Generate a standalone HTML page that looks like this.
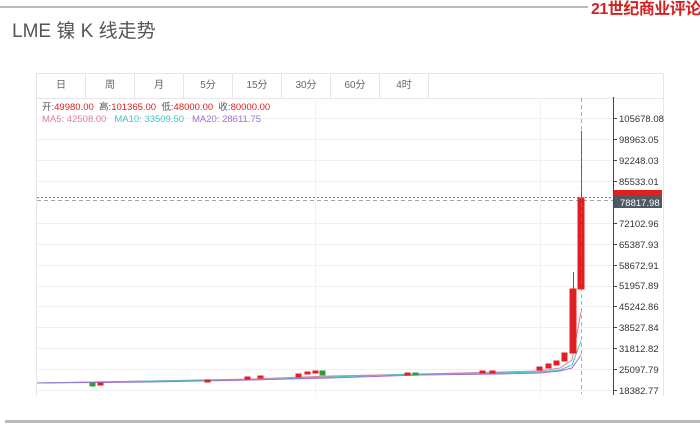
<!DOCTYPE html>
<html><head><meta charset="utf-8"><style>
body{margin:0;width:700px;height:425px;background:#fff;position:relative;overflow:hidden;font-family:"Liberation Sans","Noto Sans CJK SC",sans-serif}
.topline{position:absolute;left:0;top:6px;width:588px;height:2px;background:#bbb}
.logo{position:absolute;left:591px;top:-5px;color:#d42020;font-size:16px;font-weight:bold;letter-spacing:-0.5px;white-space:nowrap}
.title{position:absolute;left:12px;top:16px;font-size:19px;color:#555}
.box{position:absolute;left:36px;top:73px;width:626px;height:322px;border:1px solid #e6e6e6;border-bottom:none}
.tabs{position:absolute;left:0;top:0;height:24px;width:626px;border-bottom:1px solid #e6e6e6;display:flex}
.tabs div{width:48px;border-right:1px solid #e6e6e6;text-align:center;font-size:10px;line-height:24px;color:#666}
.info{position:absolute;left:42px;top:102px;font-size:9.5px;line-height:12px;white-space:nowrap;color:#555}
.r{color:#e02020}
.bottom{position:absolute;left:5px;top:420px;width:695px;height:3px;background:#bbb}
</style></head><body>
<div class="topline"></div>
<div class="logo">21世纪商业评论</div>
<div class="title">LME 镍 K 线走势</div>
<div class="box"><div class="tabs"><div>日</div><div>周</div><div>月</div><div>5分</div><div>15分</div><div>30分</div><div>60分</div><div>4时</div></div></div>
<svg width="700" height="425" style="position:absolute;left:0;top:0">
<g stroke="#f0f0f0" stroke-width="1">
<line x1="37" x2="613" y1="118.5" y2="118.5"/><line x1="37" x2="613" y1="139.5" y2="139.5"/><line x1="37" x2="613" y1="160.5" y2="160.5"/><line x1="37" x2="613" y1="181.5" y2="181.5"/><line x1="37" x2="613" y1="223.5" y2="223.5"/><line x1="37" x2="613" y1="244.5" y2="244.5"/><line x1="37" x2="613" y1="265.5" y2="265.5"/><line x1="37" x2="613" y1="286.5" y2="286.5"/><line x1="37" x2="613" y1="306.5" y2="306.5"/><line x1="37" x2="613" y1="327.5" y2="327.5"/><line x1="37" x2="613" y1="348.5" y2="348.5"/><line x1="37" x2="613" y1="369.5" y2="369.5"/><line x1="37" x2="613" y1="390.5" y2="390.5"/>
<line x1="315.5" x2="315.5" y1="98" y2="394"/><line x1="540.5" x2="540.5" y1="98" y2="394"/>
</g>
<line x1="613.5" x2="613.5" y1="97" y2="395" stroke="#444"/>
<g stroke="#444"><line x1="613" x2="617" y1="118.5" y2="118.5"/><line x1="613" x2="617" y1="139.5" y2="139.5"/><line x1="613" x2="617" y1="160.5" y2="160.5"/><line x1="613" x2="617" y1="181.5" y2="181.5"/><line x1="613" x2="617" y1="223.5" y2="223.5"/><line x1="613" x2="617" y1="244.5" y2="244.5"/><line x1="613" x2="617" y1="265.5" y2="265.5"/><line x1="613" x2="617" y1="286.5" y2="286.5"/><line x1="613" x2="617" y1="306.5" y2="306.5"/><line x1="613" x2="617" y1="327.5" y2="327.5"/><line x1="613" x2="617" y1="348.5" y2="348.5"/><line x1="613" x2="617" y1="369.5" y2="369.5"/><line x1="613" x2="617" y1="390.5" y2="390.5"/></g>
<g font-size="9.5" fill="#333" font-family="Liberation Sans,sans-serif">
<text x="619" y="122">105678.08</text><text x="619" y="143">98963.05</text><text x="619" y="164">92248.03</text><text x="619" y="185">85533.01</text><text x="619" y="227">72102.96</text><text x="619" y="248">65387.93</text><text x="619" y="269">58672.91</text><text x="619" y="289">51957.89</text><text x="619" y="310">45242.86</text><text x="619" y="331">38527.84</text><text x="619" y="352">31812.82</text><text x="619" y="373">25097.79</text><text x="619" y="394">18382.77</text>
</g>
<rect x="614" y="190" width="48" height="7" fill="#e02020"/>
<rect x="614" y="196" width="48" height="12" fill="#4f5963"/>
<text x="620" y="206" font-size="9.5" fill="#fff">78817.98</text>
<line x1="37" x2="613" y1="197.5" y2="197.5" stroke="#e05050" stroke-dasharray="2,2"/>
<line x1="37" x2="613" y1="200.5" y2="200.5" stroke="#9aa" stroke-dasharray="4,3"/>
<g fill="none" stroke-width="1">
<path d="M37 383 L150 381 L250 379 L330 376 L420 374 L500 372 L540 371 L560 368 L572 360 L581 312" stroke="#e07fa0"/>
<path d="M37 383 L150 381 L250 380 L330 377 L420 374 L500 373 L540 372 L560 370 L572 365 L581 341" stroke="#3cc8c8"/>
<path d="M37 383 L150 382 L250 380 L330 378 L420 375 L500 374 L540 373 L560 371 L572 368 L581 355" stroke="#a070d0"/>
</g>
<g fill="#e02020" stroke="#e02020">
<rect x="90" y="383" width="5" height="3" fill="#2a9d3a" stroke="#2a9d3a"/><rect x="98" y="383" width="5" height="2"/>
<rect x="205" y="380" width="5" height="2"/><rect x="245" y="377" width="5" height="2"/><rect x="258" y="376" width="5" height="2"/><rect x="296" y="374" width="5" height="3"/><rect x="305" y="372" width="5" height="2"/><rect x="313" y="371" width="5" height="2"/><rect x="320" y="371" width="5" height="4" fill="#2a9d3a" stroke="#2a9d3a"/>
<rect x="405" y="373" width="5" height="2"/><rect x="413" y="373" width="5" height="2" fill="#2a9d3a" stroke="#2a9d3a"/><rect x="480" y="371" width="5" height="2"/><rect x="490" y="371" width="5" height="2"/>
<rect x="537" y="367" width="5" height="3"/><rect x="546" y="364" width="5" height="4"/><rect x="554" y="361" width="5" height="4"/><rect x="562" y="353" width="5" height="8"/>
<line x1="573.5" y1="272" x2="573.5" y2="290"/><rect x="570" y="289" width="6" height="64"/>
<line x1="581.5" y1="131" x2="581.5" y2="198"/><rect x="578" y="198" width="6" height="91"/>
</g>
<line x1="581.5" x2="581.5" y1="98" y2="394" stroke="#778" stroke-dasharray="4,3" opacity="0.6"/>
</svg>
<div class="info"><span>开:</span><span class="r">49980.00</span>&nbsp; 高:<span class="r">101365.00</span>&nbsp; 低:<span class="r">48000.00</span>&nbsp; 收:<span class="r">80000.00</span><br>
<span style="color:#e07fa0">MA5: 42508.00</span>&nbsp;&nbsp; <span style="color:#3cc8c8">MA10: 33509.50</span>&nbsp;&nbsp; <span style="color:#a070d0">MA20: 28611.75</span></div>
<div class="bottom"></div>
</body></html>
